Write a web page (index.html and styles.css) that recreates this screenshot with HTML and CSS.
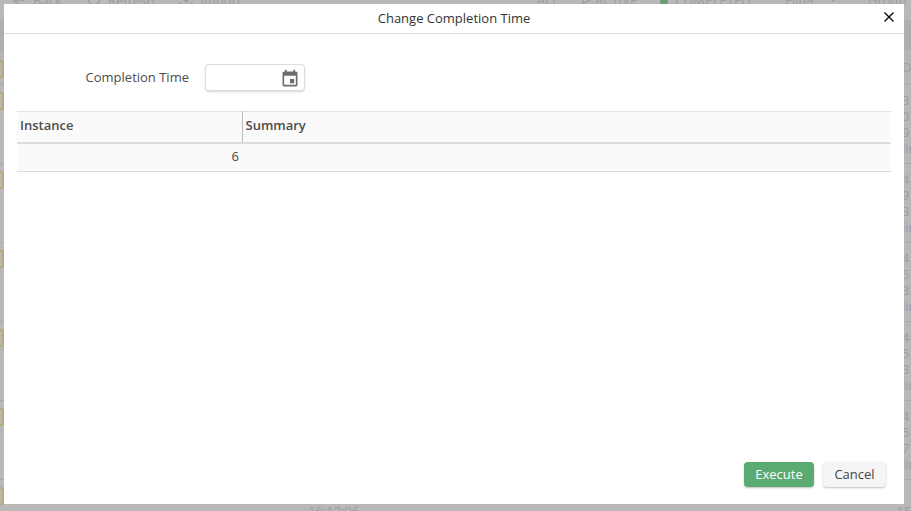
FILE: index.html
```html
<!DOCTYPE html>
<html lang="en">
  <head>
    <meta charset="UTF-8" />
    <meta name="viewport" content="width=device-width, initial-scale=1.0" />
    <title>Change Completion Time</title>
    <link rel="stylesheet" href="styles.css">
  </head>
  <body>
    <!-- page behind the dialog, only its edges show -->
    <div class="page">
      <div class="toolbar">
        <span class="tool back"><svg viewBox="0 0 14 14" width="14" height="14"><path d="M7 2L2 7l5 5M2 7h11" /></svg>Back</span>
        <span class="tool refresh"><svg viewBox="0 0 14 14" width="14" height="14"><path d="M12 7a5 5 0 1 1-1.5-3.5M11 1v3H8" /></svg>Refresh</span>
        <span class="tool import"><svg viewBox="0 0 14 14" width="14" height="14"><path d="M7 1v8M4 6l3 3 3-3M1 9v4h12V9" /></svg>Import</span>
        <span class="tool all">ALL</span>
        <span class="tool active"><svg viewBox="0 0 14 14" width="14" height="14"><path d="M4 3l7 4-7 4z" /></svg>ACTIVE</span>
        <span class="tool completed"><i class="dot"></i>COMPLETED</span>
        <span class="tool filter">Filter<svg viewBox="0 0 8 8" width="8" height="8"><path d="M1 2l3 3 3-3" /></svg></span>
        <span class="tool group">Group</span>
      </div>
      <div class="subbar"></div>
      <div class="head-row"><i class="tag"></i><div class="cell"><p>Duration</p></div></div>
      <div class="row"><i class="tag"></i><div class="cell"><p>3</p><p>0</p><p>9</p><p class="link">lin</p></div></div>
      <div class="row"><i class="tag"></i><div class="cell"><p>4</p><p>9</p><p>3</p><p class="link">lin</p></div></div>
      <div class="row"><i class="tag"></i><div class="cell"><p>4</p><p>5</p><p>3</p><p class="link">lin</p></div></div>
      <div class="row"><i class="tag"></i><div class="cell"><p>4</p><p>5</p><p>3</p><p class="link">lin</p></div></div>
      <div class="row"><i class="tag"></i><div class="cell"><p>4</p><p>5</p><p>7</p><p class="link">lin</p></div></div>
      <div class="row last">
        <i class="tag"></i>
        <span class="stamp time">16:12:06</span>
        <span class="stamp count">15</span>
        <div class="cell"><p>4</p></div>
      </div>
    </div>

    <div class="overlay"></div>

    <div class="dialog">
      <div class="dialog-header">
        <h1>Change Completion Time</h1>
        <button class="close" aria-label="Close">
          <svg viewBox="0 0 12 12" width="12" height="12"><path d="M1.5 1.5l9 9M10.5 1.5l-9 9" /></svg>
        </button>
      </div>

      <div class="dialog-body">
        <div class="field">
          <label>Completion Time</label>
          <div class="date-input">
            <svg viewBox="0 0 24 24" width="20" height="20"><path d="M17 12h-5v5h5v-5zM16 1v2H8V1H6v2H5c-1.11 0-1.99.9-1.99 2L3 19c0 1.1.89 2 2 2h14c1.1 0 2-.9 2-2V5c0-1.1-.9-2-2-2h-1V1h-2zm3 18H5V8h14v11z" /></svg>
          </div>
        </div>

        <table class="grid">
          <thead>
            <tr><th class="col-instance">Instance</th><th>Summary</th></tr>
          </thead>
          <tbody>
            <tr><td class="num">6</td><td></td></tr>
          </tbody>
        </table>
      </div>

      <div class="dialog-footer">
        <button class="btn execute">Execute</button>
        <button class="btn cancel">Cancel</button>
      </div>
    </div>
  </body>
</html>
```

FILE: styles.css
```css
* {
  box-sizing: border-box;
}

html,
body {
  margin: 0;
  height: 100%;
  overflow: hidden;
}

body {
  font-family: "Open Sans", Arial, sans-serif;
  font-size: 13px;
  color: #444;
  background: white;
}

.page {
  height: 511px;
  overflow: hidden;
  color: #dcdcdc;
}

.toolbar {
  display: flex;
  height: 20px;
  margin-top: -10px;
  font-size: 13px;
  line-height: 20px;
}

.tool {
  flex: none;
  position: relative;
}

.tool svg {
  position: absolute;
  top: 3px;
  left: -21px;
}

.tool path {
  fill: none;
  stroke: #dcdcdc;
  stroke-width: 1.5;
}

.back {
  margin-left: 33px;
  width: 75px;
}

.refresh {
  width: 92px;
}

.import {
  width: 337px;
}

.all {
  width: 58px;
}

.active {
  width: 65px;
}

.active svg {
  left: -16px;
}

.completed {
  width: 125px;
}

.dot {
  display: inline-block;
  width: 8px;
  height: 8px;
  margin-right: 7px;
  background: #8fd6a4;
  border-radius: 50%;
}

.filter {
  width: 83px;
}

.filter svg {
  top: 6px;
  left: 44px;
}

.subbar {
  height: 40px;
  margin-top: 0;
  background: #f1f1f1;
  border-top: 10px solid white;
}

.head-row {
  display: flex;
  justify-content: space-between;
  height: 35px;
  padding-top: 10px;
  background: #fbfbfb;
  border-bottom: 1px solid #eee;
}

.row {
  display: flex;
  justify-content: space-between;
  height: 79px;
  padding-top: 7px;
  border-bottom: 1px solid #eee;
}

.tag {
  display: block;
  flex: none;
  width: 4px;
  height: 18px;
  border: 2px solid #ffe9a8;
  border-left: none;
  border-radius: 0 3px 3px 0;
}

.cell {
  flex: none;
  width: 9px;
  overflow: hidden;
}

.cell p {
  margin: 0;
  height: 16px;
  line-height: 16px;
  white-space: nowrap;
}

.cell .link {
  color: #dcdcec;
}

.head-row .cell p {
  margin-top: -1px;
}

.row.last {
  justify-content: flex-start;
}

.stamp {
  line-height: 16px;
  margin-top: 16px;
}

.time {
  margin-left: 304px;
}

.count {
  margin-left: 537px;
}

.row.last .cell {
  margin-left: auto;
}

.overlay {
  position: absolute;
  inset: 0;
  background: rgba(0, 0, 0, 0.28);
}

.dialog {
  position: absolute;
  top: 4px;
  left: 4px;
  width: 900px;
  height: 500px;
  display: flex;
  flex-direction: column;
  background: white;
}

.dialog-header {
  position: relative;
  flex: none;
  height: 30px;
  border-bottom: 1px solid #ddd;
}

.dialog-header h1 {
  margin: 0;
  font-size: 13px;
  font-weight: 400;
  line-height: 29px;
  text-align: center;
  color: #333;
}

.close {
  position: absolute;
  top: 7px;
  right: 9px;
  width: 12px;
  height: 12px;
  padding: 0;
  background: none;
  border: none;
  display: flex;
}

.close path {
  fill: none;
  stroke: black;
  stroke-width: 1.3;
}

.dialog-body {
  flex: 1;
  padding: 30px 13px 0;
}

.field {
  display: flex;
  align-items: center;
  gap: 16px;
  height: 27px;
  margin-bottom: 20px;
}

.field label {
  width: 172px;
  padding-bottom: 2px;
  text-align: right;
  color: #4c4c4c;
}

.date-input {
  display: flex;
  align-items: center;
  justify-content: flex-end;
  width: 100px;
  height: 27px;
  padding: 3px 4px 0 0;
  background: white;
  border: 1px solid #ddd;
  border-radius: 4px;
  box-shadow: 0 1px 2px rgba(0, 0, 0, 0.15);
}

.date-input path {
  fill: #6e6e6e;
}

.grid {
  width: 874px;
  border-collapse: collapse;
  table-layout: fixed;
}

.grid th {
  height: 31px;
  padding: 0 3px 3px;
  font-weight: 600;
  color: #4c4c4c;
  text-align: left;
  background: #fafafa;
  border-top: 1px solid #e3e3e3;
  border-bottom: 2px solid #ddd;
}

.col-instance {
  width: 225px;
  border-right: 1px solid #bbb;
}

.grid td {
  height: 29px;
  padding: 0 3px 2px;
  background: #fafafa;
  border-bottom: 1px solid #ddd;
}

.grid .num {
  text-align: right;
}

.dialog-footer {
  display: flex;
  justify-content: flex-end;
  gap: 9px;
  flex: none;
  padding: 0 18px 17px 0;
}

.btn {
  height: 25px;
  padding: 0 0 2px;
  font-family: inherit;
  font-size: 13px;
  border: none;
  border-radius: 4px;
  box-shadow: 0 1px 2px rgba(0, 0, 0, 0.25);
}

.execute {
  width: 70px;
  color: white;
  background: #5aaa72;
}

.cancel {
  width: 63px;
  color: #444;
  background: #f5f5f5;
}
```
